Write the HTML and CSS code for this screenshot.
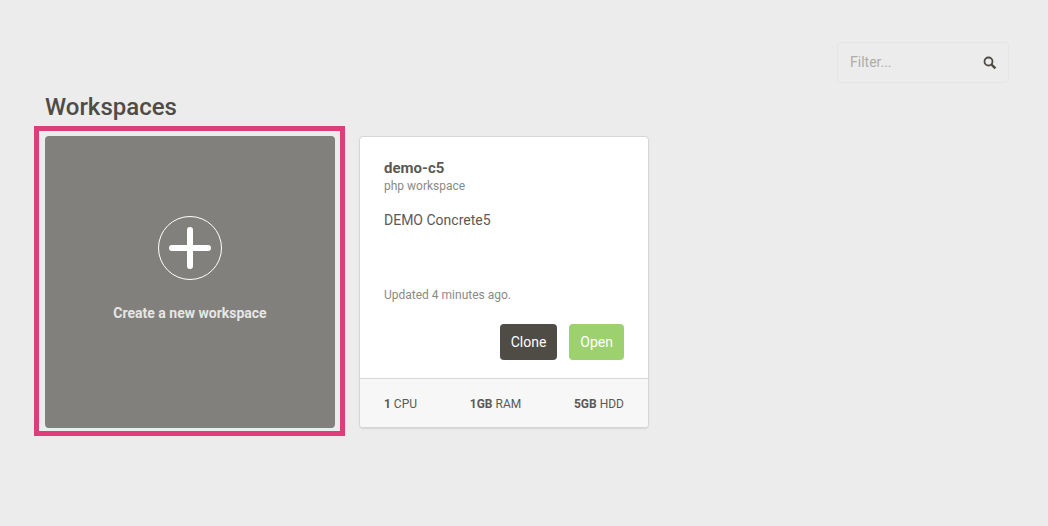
FILE: index.html
```html
<!DOCTYPE html>
<html lang="en">
<head>
    <meta charset="UTF-8">
    <meta name="viewport" content="width=device-width, initial-scale=1.0">
    <title>Workspaces</title>
    <link rel="stylesheet" href="styles.css">
</head>
<body>
    <header class="toolbar">
        <form class="filter" role="search">
            <input class="filter-input" type="text" placeholder="Filter..." aria-label="Filter workspaces">
            <button class="filter-button" type="submit" aria-label="Search">
                <svg width="14" height="14" viewBox="0 0 14 14" fill="none" stroke="#4f4b45">
                    <circle cx="5.5" cy="5.5" r="4" stroke-width="1.8"/>
                    <path d="M8.6 8.6L12.4 12.4" stroke-width="2.4"/>
                </svg>
            </button>
        </form>
    </header>

    <main class="content">
        <h1 class="title">Workspaces</h1>
        <div class="cards">
            <button class="create-card" type="button">
                <svg class="plus" width="64" height="64" viewBox="0 0 64 64" fill="none" stroke="#fff">
                    <circle cx="32" cy="32" r="31.5" stroke-width="1"/>
                    <path d="M32 14V50M14 32H50" stroke-width="6" stroke-linecap="round"/>
                </svg>
                <span>Create a new workspace</span>
            </button>

            <article class="card">
                <div class="card-body">
                    <h2 class="card-name">demo-c5</h2>
                    <p class="card-type">php workspace</p>
                    <p class="card-description">DEMO Concrete5</p>
                    <p class="card-updated">Updated 4 minutes ago.</p>
                    <div class="card-actions">
                        <button class="btn btn-dark" type="button">Clone</button>
                        <button class="btn btn-green" type="button">Open</button>
                    </div>
                </div>
                <footer class="card-specs">
                    <span><b>1</b> CPU</span>
                    <span><b>1GB</b> RAM</span>
                    <span><b>5GB</b> HDD</span>
                </footer>
            </article>
        </div>
    </main>
</body>
</html>
```

FILE: styles.css
```css
* {
    box-sizing: border-box;
}
body {
    margin: 0;
    background-color: #ececec;
    color: #4f4b45;
    font-family: Roboto, sans-serif;
    font-size: 14px;
    line-height: 20px;
}
h1, h2, p {
    margin: 0;
}
button {
    border: none;
    font-family: inherit;
    font-size: 14px;
    cursor: pointer;
}
.toolbar {
    display: flex;
    justify-content: flex-end;
    padding: 42px 39px 0;
}
.filter {
    display: flex;
    align-items: center;
    width: 172px;
    height: 41px;
    border: 1px solid #e5e5e5;
    border-radius: 4px;
}
.filter-input {
    flex: 1;
    min-width: 0;
    padding: 0 0 2px 12px;
    border: none;
    outline: none;
    background: none;
    color: inherit;
    font: inherit;
}
.filter-input::placeholder {
    color: #adadad;
    opacity: 1;
}
.filter-button {
    display: flex;
    padding: 1px 11px 0 0;
    background: none;
}
.content {
    padding: 8px 45px 40px;
}
.title {
    font-size: 24px;
    font-weight: 500;
    line-height: 32px;
}
.cards {
    display: flex;
    flex-wrap: wrap;
    gap: 24px;
    margin-top: 13px;
}
.create-card {
    position: relative;
    display: flex;
    flex-direction: column;
    align-items: center;
    width: 290px;
    padding: 80px 20px 0;
    border-radius: 4px;
    background-color: #82807d;
    color: #e6e6e5;
    font-weight: bold;
    line-height: 20px;
}
/* Pink highlight around the create card */
.create-card::after {
    content: "";
    position: absolute;
    inset: -10px -10px -8px -11px;
    border: 5px solid #dd3e79;
}
.plus {
    margin-bottom: 23px;
}
.card {
    width: 290px;
    border: 1px solid #d6d6d6;
    border-radius: 4px;
    background-color: #fff;
    box-shadow: 0 1px 1px #d6d6d6;
    color: #5c5954;
    overflow: hidden;
}
.card-body {
    padding: 21px 24px 18px;
}
.card-name {
    font-size: 15px;
    line-height: 20px;
}
.card-type,
.card-updated {
    color: #8c8a86;
    font-size: 12px;
    line-height: 16px;
}
.card-description {
    min-height: 77px;
    margin-top: 16px;
}
.card-actions {
    display: flex;
    justify-content: flex-end;
    gap: 12px;
    margin-top: 21px;
}
.btn {
    height: 36px;
    padding: 0 11px;
    border-radius: 4px;
    color: #fff;
}
.btn-dark {
    background-color: #4f4b45;
}
.btn-green {
    background-color: #9dd170;
}
.card-specs {
    display: flex;
    justify-content: space-between;
    padding: 15px 24px 13px;
    border-top: 1px solid #d6d6d6;
    background-color: #f7f7f7;
    font-size: 12px;
}
```
